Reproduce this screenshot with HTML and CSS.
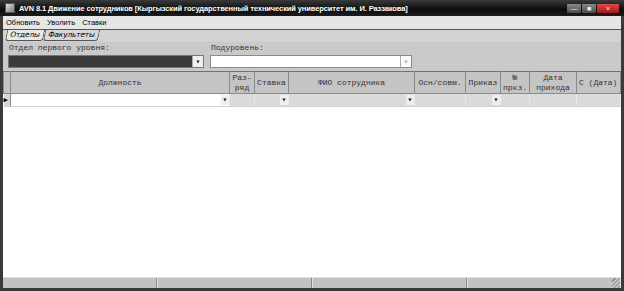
FILE: index.html
```html
<!DOCTYPE html>
<html lang="ru">
<head>
    <meta charset="UTF-8">
    <title>AVN 8.1 Движение сотрудников</title>
    <link rel="stylesheet" href="styles.css">
</head>
<body>
<div class="window">
    <div class="titlebar">
        <span class="app-icon"></span>
        <span class="title">AVN 8.1 Движение сотрудников [Кыргызский государственный технический университет им. И. Раззакова]</span>
        <div class="win-buttons">
            <span class="wbtn">&#8212;</span>
            <span class="wbtn">&#9632;</span>
            <span class="wbtn close">&#215;</span>
        </div>
    </div>

    <div class="menubar">
        <span>Обновить</span>
        <span>Уволить</span>
        <span>Ставки</span>
    </div>

    <div class="tabs">
        <span class="tab active">Отделы</span>
        <span class="tab">Факультеты</span>
    </div>

    <div class="filters">
        <div class="field">
            <label>Отдел первого уровня:</label>
            <div class="combo dark"><span class="arrow">&#9662;</span></div>
        </div>
        <div class="field wide">
            <label>Подуровень:</label>
            <div class="combo"><span class="arrow off">&#9662;</span></div>
        </div>
    </div>

    <table class="grid">
        <tr class="head">
            <th class="ind"></th>
            <th class="c-dol">Должность</th>
            <th class="c-raz">Раз-<br>ряд</th>
            <th class="c-st">Ставка</th>
            <th class="c-fio">ФИО сотрудника</th>
            <th class="c-osn">Осн/совм.</th>
            <th class="c-pr">Приказ</th>
            <th class="c-no">№<br>пркз.</th>
            <th class="c-dp">Дата<br>прихода</th>
            <th class="c-sd">С (Дата)</th>
        </tr>
        <tr class="row">
            <td class="ind">&#9654;</td>
            <td class="edit"><span class="arrow">&#9662;</span></td>
            <td></td>
            <td><span class="arrow">&#9662;</span></td>
            <td><span class="arrow">&#9662;</span></td>
            <td></td>
            <td><span class="arrow">&#9662;</span></td>
            <td></td>
            <td></td>
            <td></td>
        </tr>
    </table>

    <div class="blank"></div>

    <div class="statusbar">
        <span></span><span></span><span></span><span class="last"></span>
        <span class="grip"></span>
    </div>
</div>
</body>
</html>
```

FILE: styles.css
```css
body {
    margin: 0;
    background: #2b2b2b;
}

.window {
    width: 624px;
    height: 291px;
    box-sizing: border-box;
    border: 3px solid #3a3a3a;
    border-top: none;
    background: #c8c8c8;
    display: flex;
    flex-direction: column;
    font-family: "Liberation Sans", Arial, sans-serif;
}

.titlebar {
    height: 16px;
    margin: 0 -3px;
    padding: 0 5px;
    display: flex;
    align-items: center;
    background: linear-gradient(#3a3a3a, #0c0c0c 60%, #1c1c1c);
    color: #fff;
}

.app-icon {
    width: 8px;
    height: 8px;
    margin-right: 4px;
    background: linear-gradient(135deg, #e0e0e0, #7a7a7a);
    border: 1px solid #555;
}

.title {
    font-weight: bold;
    font-size: 7.5px;
    letter-spacing: -0.1px;
    flex: 1;
    white-space: nowrap;
}

.win-buttons {
    display: flex;
    gap: 1px;
}

.wbtn {
    width: 14px;
    height: 9px;
    font-size: 7px;
    line-height: 9px;
    text-align: center;
    color: #eee;
    background: linear-gradient(#8a8a8a, #4c4c4c);
    border-radius: 1px;
}

.wbtn.close {
    width: 22px;
    background: linear-gradient(#e04a4a, #a81818);
}

.menubar {
    height: 13px;
    padding: 0 2px;
    display: flex;
    gap: 5px;
    font-size: 7.5px;
    line-height: 13px;
    color: #000;
    background: #e6e6e6;
}

.menubar span {
    padding: 0 1px;
}

.tabs {
    height: 12px;
    border-top: 1px solid #555;
    padding-left: 3px;
    display: flex;
    background: #d2d2d2;
    font-size: 7.5px;
    font-family: "DejaVu Sans", sans-serif;
}

.tab {
    height: 10px;
    line-height: 10px;
    padding: 0 3px;
    border: 1px solid #555;
    border-top: none;
    border-radius: 0 0 3px 3px;
    background: #d8d8d8;
    letter-spacing: -0.2px;
    transform: skewX(-12deg);
}

.tab.active {
    background: #e8e8e8;
}

.filters {
    display: flex;
    gap: 6px;
    padding: 1px 5px 3px;
    background: #c9c9c9;
    font-family: "Liberation Mono", "Courier New", monospace;
    font-size: 8px;
}

.field {
    display: flex;
    flex-direction: column;
    gap: 3px;
    width: 196px;
}

.field.wide {
    width: 202px;
}

.field label {
    line-height: 9px;
    color: #333;
    padding-left: 1px;
}

.combo {
    height: 13px;
    box-sizing: border-box;
    border: 1px solid #8a8a8a;
    background: #fff;
    display: flex;
    justify-content: flex-end;
}

.combo.dark {
    background: #3a3a3a;
    border-color: #777;
}

.combo .arrow {
    width: 10px;
    background: #f0f0f0;
    border-left: 1px solid #aaa;
}

.arrow {
    display: inline-block;
    font-size: 8px;
    line-height: 11px;
    text-align: center;
    color: #111;
}

.arrow.off {
    color: #b0b0b0;
    background: #fafafa;
}

.grid {
    border-collapse: collapse;
    width: 100%;
    table-layout: fixed;
    font-family: "Liberation Mono", "Courier New", monospace;
    font-size: 8px;
    background: #fff;
}

.grid th {
    height: 21px;
    padding: 0;
    font-weight: normal;
    line-height: 10px;
    color: #333;
    background: #c4c4c4;
    border: 1px solid #8a8a8a;
    border-top-color: #707070;
}

.grid td {
    height: 12px;
    padding: 0;
    background: #dadada;
    border-right: 1px solid #e8e8e8;
    border-bottom: 1px solid #cfcfcf;
    text-align: right;
}

.grid .ind {
    width: 6px;
    text-align: left;
    font-size: 7px;
    color: #000;
}

.grid td.ind {
    background: #d6d6d6;
    border-right: 1px solid #8a8a8a;
}

.grid td.edit {
    background: #fff;
}

.grid td .arrow {
    width: 8px;
    height: 10px;
    line-height: 10px;
    background: #eee;
    vertical-align: middle;
}

.c-dol { width: 218px; }
.c-raz { width: 24px; }
.c-st { width: 33px; }
.c-fio { width: 125px; }
.c-osn { width: 50px; }
.c-pr { width: 34px; }
.c-no { width: 28px; }
.c-dp { width: 46px; }
.grid th.c-sd { text-align: left; padding-left: 2px; }

.blank {
    flex: 1;
    background: #fff;
}

.statusbar {
    height: 10px;
    display: flex;
    padding-top: 1px;
    background: #e0e0e0;
}

.statusbar span {
    width: 153px;
    background: #c2c2c2;
    border-right: 1px solid #888;
    margin-right: 1px;
}

.statusbar .last {
    flex: 1;
    border-right: none;
    margin-right: 0;
}

.statusbar .grip {
    width: 8px;
    background: repeating-linear-gradient(135deg, #c2c2c2 0 2px, #888 2px 3px);
    border: none;
}
```
